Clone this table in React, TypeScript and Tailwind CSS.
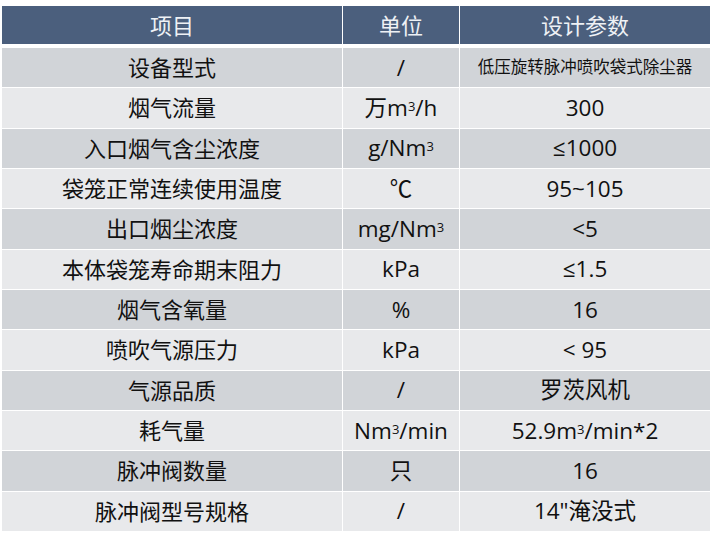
const rows: [string, React.ReactNode, React.ReactNode][] = [
  ["设备型式", "/", <span className="text-[16.5px]">低压旋转脉冲喷吹袋式除尘器</span>],
  ["烟气流量", <>万m<Sup />/h</>, "300"],
  ["入口烟气含尘浓度", <>g/Nm<Sup /></>, "≤1000"],
  ["袋笼正常连续使用温度", "℃", "95~105"],
  ["出口烟尘浓度", <>mg/Nm<Sup /></>, "<5"],
  ["本体袋笼寿命期末阻力", "kPa", "≤1.5"],
  ["烟气含氧量", "%", "16"],
  ["喷吹气源压力", "kPa", "< 95"],
  ["气源品质", "/", "罗茨风机"],
  ["耗气量", <>Nm<Sup />/min</>, <>52.9m<Sup />/min*2</>],
  ["脉冲阀数量", "只", "16"],
  ["脉冲阀型号规格", "/", "14\"淹没式"],
];

function Sup() {
  return <sup className="relative -top-[2px] text-[13px]">3</sup>;
}

export default function App() {
  return (
    <div
      className="h-[549px] w-[715px] bg-white pl-[2px] pt-[6px] text-[#111111]"
      style={{ fontFamily: '"Open Sans", "Noto Sans CJK SC", sans-serif' }}
    >
      <div className="grid w-[708px] grid-cols-[340px_116px_250px] gap-x-px text-[22px] text-[#eef1f5]">
        {["项目", "单位", "设计参数"].map((h) => (
          <div key={h} className="flex h-[38px] items-center justify-center bg-[#4b5f7d]">
            {h}
          </div>
        ))}
      </div>
      <div className="mt-[4px] grid w-[708px] grid-cols-[340px_116px_250px] gap-px text-[22.5px]">
        {rows.map(([name, unit, value], i) => {
          const bg = i % 2 === 0 ? "bg-[#d1d4d8]" : "bg-[#e8e9eb]";
          return [name, unit, value].map((cell, j) => (
            <div key={`${i}-${j}`} className={`flex h-[39.33px] items-center justify-center ${bg} ${j === 0 ? "text-[22px]" : ""}`}>
              {cell}
            </div>
          ));
        })}
      </div>
    </div>
  );
}
